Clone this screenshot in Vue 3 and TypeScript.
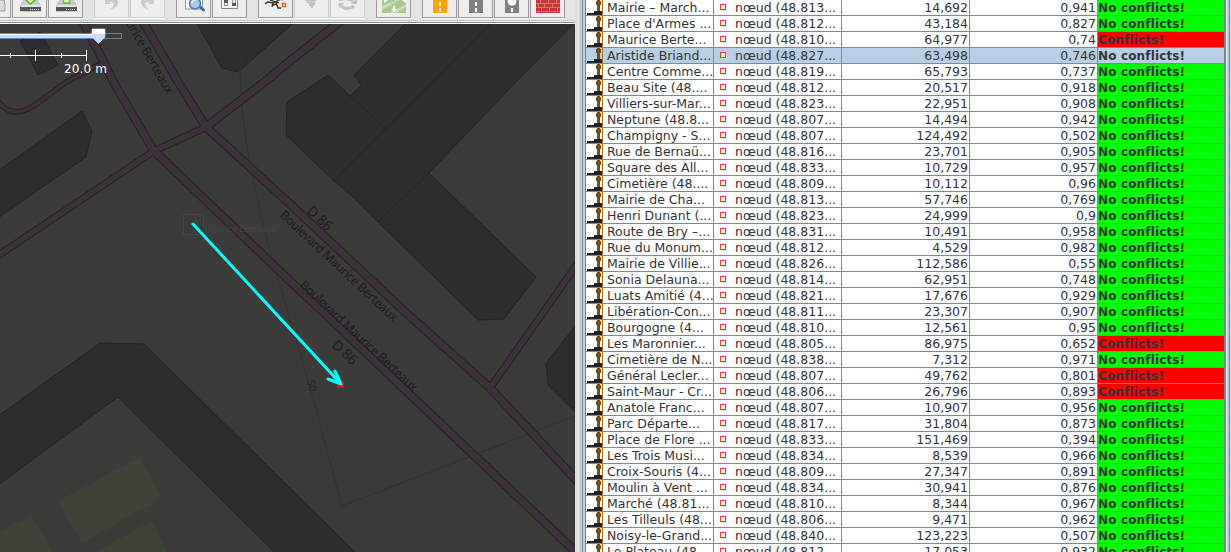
<script setup lang="ts">
interface Row {
  name: string
  lat: string
  distance: string
  score: string
  conflict?: boolean
  selected?: boolean
}

const raw: [string, string, string, string][] = [
  ['Mairie – March...', '813', '14,692', '0,941'],
  ["Place d'Armes ...", '812', '43,184', '0,827'],
  ['Maurice Berte...', '810', '64,977', '0,74'],
  ['Aristide Briand...', '827', '63,498', '0,746'],
  ['Centre Comme...', '819', '65,793', '0,737'],
  ['Beau Site (48....', '812', '20,517', '0,918'],
  ['Villiers-sur-Mar...', '823', '22,951', '0,908'],
  ['Neptune (48.8...', '807', '14,494', '0,942'],
  ['Champigny - S...', '807', '124,492', '0,502'],
  ['Rue de Bernaü...', '816', '23,701', '0,905'],
  ['Square des All...', '833', '10,729', '0,957'],
  ['Cimetière (48....', '809', '10,112', '0,96'],
  ['Mairie de Cha...', '813', '57,746', '0,769'],
  ['Henri Dunant (...', '823', '24,999', '0,9'],
  ['Route de Bry –...', '831', '10,491', '0,958'],
  ['Rue du Monum...', '812', '4,529', '0,982'],
  ['Mairie de Villie...', '826', '112,586', '0,55'],
  ['Sonia Delauna...', '814', '62,951', '0,748'],
  ['Luats Amitié (4...', '821', '17,676', '0,929'],
  ['Libération-Con...', '811', '23,307', '0,907'],
  ['Bourgogne (4...', '810', '12,561', '0,95'],
  ['Les Maronnier...', '805', '86,975', '0,652'],
  ['Cimetière de N...', '838', '7,312', '0,971'],
  ['Général Lecler...', '807', '49,762', '0,801'],
  ['Saint-Maur - Cr...', '806', '26,796', '0,893'],
  ['Anatole Franc...', '807', '10,907', '0,956'],
  ['Parc Départe...', '817', '31,804', '0,873'],
  ['Place de Flore ...', '833', '151,469', '0,394'],
  ['Les Trois Musi...', '834', '8,539', '0,966'],
  ['Croix-Souris (4...', '809', '27,347', '0,891'],
  ['Moulin à Vent ...', '834', '30,941', '0,876'],
  ['Marché (48.81...', '810', '8,344', '0,967'],
  ['Les Tilleuls (48...', '806', '9,471', '0,962'],
  ['Noisy-le-Grand...', '840', '123,223', '0,507'],
  ['Le Plateau (48...', '812', '17,053', '0,932'],
]
const conflicts = new Set([2, 21, 23, 24])
const rows: Row[] = raw.map(([name, lat, distance, score], i) => ({
  name, lat, distance, score, conflict: conflicts.has(i), selected: i === 3,
}))

const roads = [
  'M82 20 L104 62 Q112 80 118 90 L154 151 L290 281 L321 310 L580 556',
  'M142 20 L183 90 L206 127 L290 204 L403 310 L490 388 L580 484',
  'M267 80 L290 61 L342 20 M206 127 L267 80',
]
const minorRoads = ['M-4 257 L154 151 L206 127', 'M490 388 L545 310 L580 260']
const lanes = ['M-4 99 Q10 118 28 109 C42 102 58 86 72 79 L104 62']
</script>

<template>
  <div class="app">
    <section class="editor">
      <div class="toolbar">
        <div class="btn first"><svg viewBox="0 0 35 18"><path d="M20 0h8l1 5v6h-9z" fill="#ddd" stroke="#999" /></svg></div>
        <div class="btn"><svg viewBox="0 0 35 18"><path d="M11 0h15l3 6v5q0 1-1 1H9q-1 0-1-1V6z" fill="#c9cbc7" /><path d="M8 7h21v4H8z" fill="#555753" /><path d="M10 5h17l1 2H9z" fill="#e4e6e1" /><path d="M18 9.500h9" stroke="#ddd" stroke-dasharray="1 1" /><path d="M13-1L18.500 4L24-1z" fill="#e4ffd0" stroke="#5bb512" stroke-width="1.500" /></svg></div>
        <div class="btn"><svg viewBox="0 0 35 18"><path d="M11 0h15l3 6v5q0 1-1 1H9q-1 0-1-1V6z" fill="#c9cbc7" /><path d="M8 7h21v4H8z" fill="#555753" /><path d="M10 5h17l1 2H9z" fill="#e4e6e1" /><path d="M18 9.500h9" stroke="#ddd" stroke-dasharray="1 1" /><path d="M15.500-2h6v5h-6z" fill="#e4ffd0" stroke="#65c516" stroke-width="1.500" /></svg></div>
        <i class="gap" />
        <div class="btn off"><svg viewBox="0 0 35 18"><path d="M11-2v6h6l-2-2c6-1 7 4 0 8c9-2 11-8 7-12z" fill="#cacaca" /></svg></div>
        <div class="btn off"><svg viewBox="0 0 35 18"><path d="M24-2v6h-6l2-2c-6-1-7 4 0 8c-9-2-11-8-7-12z" fill="#cacaca" /></svg></div>
        <i class="gap" />
        <div class="btn"><svg viewBox="0 0 35 18"><path d="M9.500-1h17v10h-17z" fill="#f8f8f8" stroke="#999" /><path d="M23 6l4.500 4" stroke="#3f69a0" stroke-width="3" stroke-linecap="round" /><circle cx="19" cy="3.500" r="5.500" fill="#a9cbed" stroke="#4a7ab5" stroke-width="1.500" /><path d="M15.500 3q1-3 4-3" fill="none" stroke="#e8f4ff" stroke-width="1.500" /></svg></div>
        <div class="btn"><svg viewBox="0 0 35 18"><path d="M9.500-1h16v9.500h-16z" fill="#f2f4f2" stroke="#888" /><path d="M12 0h4v6h-4zM20 0h4v6h-4z" fill="#555753" /><path d="M12.500 3h3v2.500h-3zM20.500 0h3v3h-3z" fill="#eee" /></svg></div>
        <i class="gap" />
        <div class="btn"><svg viewBox="0 0 35 18"><path d="M7 4l3-2l5 1l8-4M12 0l9 3M15 3l-1 4M18 2l2 6l3 0M19 4l-4 1M22-1l3 1" fill="none" stroke="#3a2a1c" stroke-width="1.300" /><path d="M24.500 3.500h3v3h-3z" fill="#fff" stroke="#ef5b20" stroke-width="1.500" /></svg></div>
        <div class="btn off"><svg viewBox="0 0 35 18"><path d="M11-1l4 4l5-2M13 0h9M18 2v6M15 5h4l2-3" fill="none" stroke="#c2c2c2" stroke-width="2" /></svg></div>
        <div class="btn off"><svg viewBox="0 0 35 18"><path d="M9 0q8-3 14 1M9 4q7 8 15 2" fill="none" stroke="#c2c2c2" stroke-width="3" /><path d="M20 4h7v-5zM9 8V3h5z" fill="#c2c2c2" /></svg></div>
        <i class="gap" />
        <div class="btn"><svg viewBox="0 0 35 18"><path d="M6 0h24v13H6z" fill="#a5ca8b" /><path d="M6 6L20 0h4L6 10zM14 13L30 4v3L20 13z" fill="#c8deb8" /><path d="M8 0h4l-4 3zM26 0h4v3zM17 6h2v3h2l-3 3l-3-3h2z" fill="#fff" /></svg></div>
        <i class="gap" />
        <div class="btn"><svg viewBox="0 0 35 18"><path d="M11 0h14v13H11z" fill="#ffa500" /><path d="M18 2v4M18 8v4" stroke="#fff" stroke-width="2" /></svg></div>
        <div class="btn"><svg viewBox="0 0 35 18"><path d="M11 0h14v13H11z" fill="#808080" /><path d="M18 2v4M18 8v4" stroke="#fff" stroke-width="2" /></svg></div>
        <div class="btn"><svg viewBox="0 0 35 18"><path d="M11 0h14v13H11z" fill="#808080" /><circle cx="18" cy="1" r="4.500" fill="#fff" /><path d="M18 8v4" stroke="#fff" stroke-width="2" /></svg></div>
        <div class="btn"><svg viewBox="0 0 35 18"><path d="M6 0h24v13H6z" fill="#cb3434" /><path d="M6 3.500h24M6 7.500h24M6 11.500h24M10.500 0v3M18.500 0v3M26.500 0v3M8.500 4v3M14.500 4v3M22.500 4v3M11.500 8v3M19.500 8v3M27.500 8v3" stroke="#de8080" stroke-width="0.800" /></svg></div>
        <i class="gap" />
        <div class="btn" />
      </div>
      <svg class="map" viewBox="0 24 575 528" width="575" height="528">
        <rect x="0" y="24" width="575" height="528" fill="#3b3b39" />
        <g fill="#3e4338">
          <path d="M58 501L139 458L162 498L82 543Z" />
          <path d="M0 531L31 515L53 552H0ZM95 552L152 521L167 552Z" />
        </g>
        <g fill="#2d2d2d" stroke="#242424" stroke-width="1">
          <path d="M20 41L40 32L58 65L38 75Z" />
          <path d="M195 20L222 68L238 72L297 20Z" />
          <path d="M-2 171L82 111L92 131L86 157L-2 218Z" />
          <path d="M287 102L328 75L350 96L361 85L354 75L366 63L409 20H577L518 80L429 173L536 277L504 319L478 320L378 222L353 197L334 181L286 135Z" />
          <path d="M334 181L386 129L494 20M350 96L386 129M378 222L429 173" fill="none" />
          <path d="M580 320L546 363L548 385L580 417Z" />
          <path d="M-2 416L100 343L144 344L359 556H278L118 397L-2 485Z" />
        </g>
        <path d="M240 24V80Q242 120 250 165Q260 215 272 258L310 387L342 506L575 416" fill="none" stroke="#333331" />
        <g fill="none" stroke="#262026">
          <path v-for="d in lanes" :key="d" :d="d" stroke-width="5.500" />
          <path v-for="d in minorRoads" :key="d" :d="d" stroke-width="7.500" />
          <path v-for="d in roads" :key="d" :d="d" stroke-width="9" />
        </g>
        <g fill="none" stroke="#3d323b">
          <path v-for="d in lanes" :key="d" :d="d" stroke-width="3.500" />
          <path v-for="d in minorRoads" :key="d" :d="d" stroke-width="5.500" />
          <path v-for="d in roads" :key="d" :d="d" stroke-width="7" />
        </g>
        <g class="street">
          <text transform="translate(279 216) rotate(43)" textLength="156">Boulevard Maurice Berteaux</text>
          <text transform="translate(299 286) rotate(43)" textLength="156">Boulevard Maurice Berteaux</text>
          <text transform="translate(167 95) rotate(60)" text-anchor="end" textLength="101">Maurice Berteaux</text>
          <text class="ref" transform="translate(306 212) rotate(43)" textLength="29">D 86</text>
          <text class="ref" transform="translate(331 346) rotate(43)" textLength="29">D 86</text>
          <text class="ref" transform="translate(149 18) rotate(60)">6</text>
          <text class="num" transform="translate(307 381) rotate(76)">50</text>
        </g>
        <g fill="none" stroke="#454544">
          <rect x="183.500" y="214.500" width="20" height="20" />
          <path d="M194 216h6v12h-5" />
        </g>
        <circle cx="196" cy="221" r="2" fill="#484848" />
        <text class="ghost" x="204" y="232" textLength="72">Maurice Berteaux</text>
        <rect x="337" y="381" width="7" height="7" fill="#f00" />
        <path d="M193 224L341 384M335 371L341 384L328 379" fill="none" stroke="#0ff" stroke-width="3" stroke-linecap="round" stroke-linejoin="round" />
        <rect x="-2" y="33.500" width="123.500" height="5" fill="none" stroke="#708090" />
        <path d="M0 33h98v6H0z" fill="#6382bf" /><path d="M0 34h98v4H0z" fill="#c8dcf2" /><path d="M0 34h98v1H0z" fill="#fff" />
        <path d="M92 29h13v8l-6.500 6.500L92 37z" fill="#c8dcf3" stroke="#e8eef8" stroke-width="0.600" />
        <path d="M92 29h13v5H92z" fill="#fff" />
        <path d="M0 55.500H87M10.500 53v5M35.500 50v11M61.500 53v5M86.500 50v11" stroke="#fff" fill="none" />
        <text class="scale" x="64" y="73" textLength="43">20.0 m</text>
      </svg>
    </section>
    <div class="divider" />
    <section class="matches">
      <div v-for="(r, i) in rows" :key="i" class="row" :class="{ selected: r.selected }">
        <div class="cell name">
          <svg class="stop" width="16" height="15" viewBox="0 0 16 15" shape-rendering="crispEdges"><path d="M0 13h7v-2h8v4H0z" fill="#222" /><path d="M15 0h1v15h-1z" fill="#a87018" /><path d="M10 0h3v1h1v4h-1v6h-3V5H9V1h1z" fill="#7a4c10" /></svg>
          <span>{{ r.name }}</span>
        </div>
        <div class="cell node"><i class="dot" /><span>nœud (48.{{ r.lat }}...</span></div>
        <div class="cell num">{{ r.distance }}</div>
        <div class="cell num">{{ r.score }}</div>
        <div class="cell state" :class="{ bad: r.conflict }">{{ r.conflict ? 'Conflicts!' : 'No conflicts!' }}</div>
      </div>
    </section>
    <div class="edge" />
  </div>
</template>

<style>
body { margin: 0; overflow: hidden; }
</style>
<style scoped>
.app { display: flex; width: 1231px; height: 552px; overflow: hidden; background: #eee; font-family: "DejaVu Sans", sans-serif; color: #333; }
.editor { width: 575px; flex: none; display: flex; flex-direction: column; }
.toolbar { height: 24px; flex: none; display: flex; gap: 1px; overflow: hidden; box-sizing: border-box; border-bottom: 1px solid #fff; background: linear-gradient(#e4e4e4 0 20px, #ccc 20px 21px, #eee 21px 22px, #7a8a99 22px); }
.btn { width: 35px; height: 18px; flex: none; box-sizing: border-box; border: 1px solid #999; border-top: 0; background: #eee; box-shadow: 0 1px #fff; }
.btn svg { display: block; width: 35px; height: 18px; margin-left: -1px; }
.btn.first { margin-left: -24px; }
.btn.off { border-color: #ccc; }
.gap { width: 9px; flex: none; }
.map { display: block; flex: none; overflow: hidden; }
.street { font-family: "Noto Sans", sans-serif; font-size: 12.5px; fill: #211c22; }
.ref { font-size: 14px; }
.street .num { font-size: 10px; fill: #252525; }
.ghost { font: 9px "Noto Sans", sans-serif; fill: #444443; }
.scale { font: 12px "DejaVu Sans", sans-serif; fill: #fff; }
.divider { width: 11px; flex: none; background: linear-gradient(90deg, #ddd 0 3px, #eee 3px 4px, #ccc 4px 7px, #7a8a99 7px 8px, #b8cfe5 8px 10px, #6382bf 10px); }
.matches { width: 638px; flex: none; background: #fff; border-right: 2px solid #7a8a99; }
.row { display: grid; grid-template-columns: 128px 128px 128px 128px 126px; height: 16px; background: #fff; }
.row.selected { background: #b8cfe5; }
.cell { box-sizing: border-box; height: 16px; border-right: 1px solid #7a8a99; border-bottom: 1px solid #7a8a99; overflow: hidden; font-size: 12.5px; line-height: 16px; white-space: pre; letter-spacing: 0; display: flex; }
.stop { flex: none; margin-left: 1px; margin-right: 4px; }
.dot { width: 6px; height: 6px; box-sizing: border-box; border: 1px solid #d84020; box-shadow: 1px 1px #ddd; background: #fff; margin: 4px 9px 0 6px; flex: none; }
.cell.num { justify-content: flex-end; padding-right: 1px; }
.state { font-weight: bold; font-size: 12px; letter-spacing: 0.15px; background: #0f0; border-right: 0; }
.state.bad { background: #f00; }
.selected .state { background: #b8cfe5; }
.edge { flex: 1; background: linear-gradient(90deg, #eee 0 1px, #b8cfe5 1px 3px, #7a8a99 3px 4px, #ddd 4px); }
</style>
